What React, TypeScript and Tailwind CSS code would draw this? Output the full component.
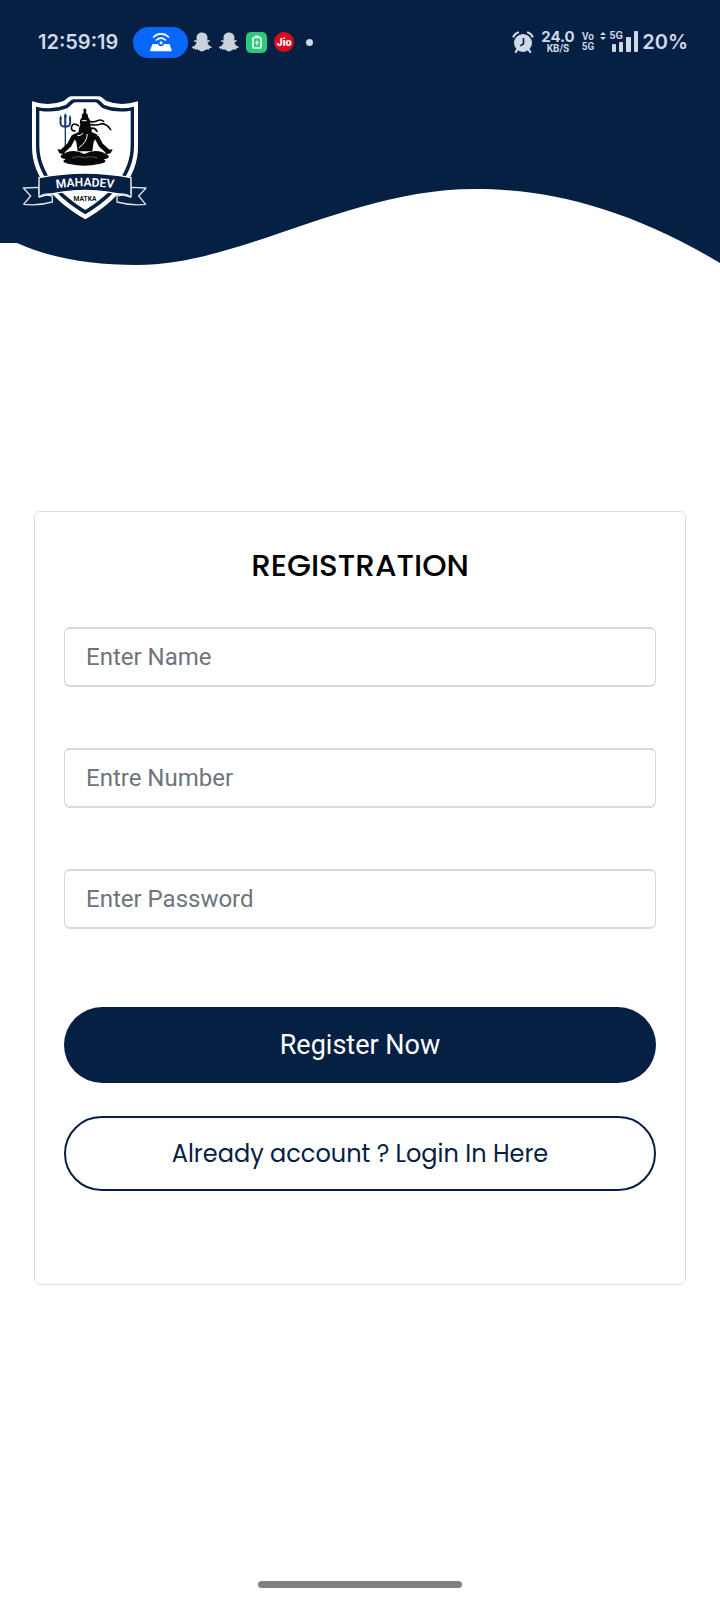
import { FaSnapchatGhost } from "react-icons/fa";

type Field = {
  id: string;
  type: string;
  placeholder: string;
};

const fields: Field[] = [
  { id: "name", type: "text", placeholder: "Enter Name" },
  { id: "number", type: "tel", placeholder: "Entre Number" },
  { id: "password", type: "password", placeholder: "Enter Password" },
];

function HotspotIcon() {
  return (
    <svg width="24" height="20" viewBox="0 0 24 20" fill="none">
      <path d="M3.500 12h17l2.300 6.200a1 1 0 0 1-1 1H2.200a1 1 0 0 1-1-1z" fill="#fff" />
      <circle cx="12" cy="11.500" r="2.800" fill="#0866fb" />
      <circle cx="12" cy="10.800" r="1.500" fill="#fff" />
      <path
        d="M4.500 5a10.500 10.500 0 0 1 15 0M7.500 8a6.300 6.300 0 0 1 9 0"
        stroke="#fff"
        strokeWidth="1.600"
        strokeLinecap="round"
      />
    </svg>
  );
}

function BatteryIcon() {
  return (
    <svg width="10" height="14" viewBox="0 0 10 14" fill="none">
      <path d="M3 1.500h4" stroke="#fff" strokeWidth="2" />
      <rect x="1" y="2.500" width="8" height="10.500" rx="1" stroke="#fff" strokeWidth="1.500" />
      <path d="M5.800 4.200 3 8.200h1.700l-.5 3L7 7.200H5.300z" fill="#fff" />
    </svg>
  );
}

function AlarmIcon() {
  return (
    <svg width="22" height="22" viewBox="0 0 22 22" fill="none">
      <circle cx="11" cy="12" r="9" fill="#cfd9e8" />
      <path
        d="M1.500 5.500a8 8 0 0 1 4.500-4M20.500 5.500a8 8 0 0 0-4.500-4M5 19l-1.200 2M17 19l1.200 2"
        stroke="#cfd9e8"
        strokeWidth="2.200"
        strokeLinecap="round"
      />
      <path d="M11.500 7v5.700L8.300 14.800" stroke="#062044" strokeWidth="1.600" />
    </svg>
  );
}

function SignalIcon() {
  return (
    <svg width="26" height="22" viewBox="0 0 26 22" fill="#cfd9e8">
      <rect x="0" y="13" width="4" height="8" rx="1" />
      <rect x="7" y="11" width="4" height="10" rx="1" />
      <rect x="14" y="6" width="5" height="15" rx="1" />
      <rect x="22" y="0" width="4" height="21" rx="1" />
    </svg>
  );
}

// shield with the seated figure, the trident and the ribbon across it
function Logo() {
  return (
    <svg className="block h-[135px] w-[140px]" viewBox="0 0 420 405" fill="none">
      <path
        d="M51 34Q102 50 146 33L161 21Q165 19 170 19H250Q256 19 260 22L274 33Q318 50 369 34V170C369 264 302 334 211 388C120 334 51 264 51 170Z"
        fill="#fff"
      />
      <path
        d="M63 50Q110 62 152 45L168 31Q172 28 177 28H244Q249 28 253 31L268 45Q310 62 357 50V168C357 254 298 320 211 373C124 320 63 254 63 168Z"
        fill="#062044"
      />
      <path
        d="M73 62Q118 70 158 54L174 40Q177 37 181 37H240Q244 37 247 40L262 54Q302 70 347 62V166C347 247 292 310 211 360C130 310 73 247 73 166Z"
        fill="#fff"
      />

      {/* trident */}
      <path d="M151 82V180" stroke="#1d3a66" strokeWidth="4" />
      <path
        d="M137 84C135 104 137 110 151 110C165 110 167 104 165 84M151 110V74"
        stroke="#1d3a66"
        strokeWidth="6"
      />
      <path d="m151 68-5 14h10zM137 74l-4 12h8zM165 74l-4 12h8z" fill="#1d3a66" />

      {/* seated figure */}
      <g fill="#080808">
        <path d="M205 58Q210 53 214 59L213 68Q221 74 219 82Q227 88 225 104Q232 116 230 126L248 134L236 156L232 184H188L184 156L170 136L191 126Q190 114 196 104Q192 90 201 82Q198 74 206 68Z" />
        <path d="M138 196Q172 172 208 192Q246 172 280 196Q286 206 266 208Q282 217 252 222Q208 233 163 222Q134 216 152 208Q132 204 138 196Z" />
        <path d="M127 178l14 1 10 5-5 9-13-3zM293 178l-14 1-10 5 5 9 13-3z" />
      </g>
      <path
        d="M176 140L162 166L142 184M244 140L258 166L278 184"
        stroke="#080808"
        strokeWidth="14"
        strokeLinejoin="round"
      />
      <path
        d="M190 107Q176 96 170 109Q166 122 180 123M224 94Q238 98 247 92Q257 87 266 94M226 104Q246 107 260 101Q276 102 287 119M228 115Q240 112 246 124"
        stroke="#080808"
        strokeWidth="5"
        strokeLinecap="round"
      />
      <path
        d="M217 132Q216 156 192 173M204 130Q195 140 187 136M201 92h14"
        stroke="#fff"
        strokeWidth="3"
      />
      <path d="M170 204Q190 196 208 203Q230 196 248 204" stroke="#777" strokeWidth="2" />

      {/* ribbon tails */}
      <path
        d="M72 292L25 294L47 318L26 343Q70 348 112 336V318L72 310ZM348 292L393 294L371 318L392 343Q350 348 306 336V318L348 310Z"
        fill="#062044"
        stroke="#dbe3ee"
        strokeWidth="4"
        strokeLinejoin="round"
      />
      <path
        d="M72 263Q210 235 348 263V321Q210 281 72 321Z"
        fill="#062044"
        stroke="#fff"
        strokeWidth="4"
        strokeLinejoin="round"
      />
      <path d="M72 321Q84 308 112 313M348 321Q334 308 306 313" stroke="#fff" strokeWidth="3" />
      <path id="ribbon-line" d="M80 302Q210 276 340 302" />
      <text
        className="font-['Roboto',sans-serif] text-[36px] font-semibold"
        fill="#fff"
        textAnchor="middle"
      >
        <textPath href="#ribbon-line" startOffset="50%">
          MAHADEV
        </textPath>
      </text>
      <text
        className="font-['Roboto',sans-serif] text-[20px] font-bold"
        x="210"
        y="332"
        fill="#111"
        textAnchor="middle"
      >
        MATKA
      </text>
    </svg>
  );
}

function StatusBar() {
  return (
    <div className="flex h-[84px] items-center justify-between pr-8 pl-[38px] font-['Inter',sans-serif] text-[#cfd9e8]">
      <div className="flex items-center">
        <span className="text-[20px] leading-6 font-semibold">12:59:19</span>
        <div className="ml-[15px] flex h-[31px] w-[55px] items-center justify-center rounded-full bg-[#0866fb]">
          <HotspotIcon />
        </div>
        <div className="ml-1 flex items-center gap-[7px] text-[#c9d1da]">
          <FaSnapchatGhost size={20} />
          <FaSnapchatGhost size={20} />
          <div className="flex h-[21px] w-[21px] items-center justify-center rounded-[5px] bg-[#2dca7b]">
            <BatteryIcon />
          </div>
          <div className="flex h-5 w-5 items-center justify-center rounded-full bg-[#dc0b1b] text-[10px] leading-3 font-extrabold text-white">
            Jio
          </div>
        </div>
        <div className="ml-3 h-[7px] w-[7px] rounded-full bg-[#cfd9e8]" />
      </div>
      <div className="flex items-center">
        <AlarmIcon />
        <div className="ml-[7px] flex flex-col items-center font-bold">
          <span className="text-[15px] leading-[14px]">24.0</span>
          <span className="font-['Roboto',sans-serif] text-[10px] leading-[10px]">KB/S</span>
        </div>
        <div className="ml-[7px] flex flex-col items-center font-['Roboto',sans-serif] text-[10px] leading-[10px] font-semibold">
          <span>Vo</span>
          <span>5G</span>
        </div>
        <div className="relative ml-[18px]">
          <SignalIcon />
          <div className="absolute -top-px -left-3 flex items-center gap-[3px]">
            <svg width="6" height="8" viewBox="0 0 6 8" fill="#cfd9e8">
              <path d="m3 0 3 3H0zM3 8l3-3H0z" />
            </svg>
            <span className="font-['Roboto',sans-serif] text-[11px] leading-3 font-semibold">
              5G
            </span>
          </div>
        </div>
        <span className="ml-1 text-[20px] leading-6 font-semibold">20%</span>
      </div>
    </div>
  );
}

export default function App() {
  return (
    <div className="flex min-h-screen flex-col bg-white">
      <header className="relative h-[266px]">
        <svg
          className="absolute inset-0 h-full w-full"
          viewBox="0 0 720 266"
          preserveAspectRatio="none"
        >
          <path
            d="M0 0H720V263C630 209 550 189 475 189C350 189 240 265 137 265C90 265 50 258 17 243H0Z"
            fill="#062044"
          />
        </svg>
        <div className="relative">
          <StatusBar />
          <div className="px-[15px] pt-[6px]">
            <Logo />
          </div>
        </div>
      </header>

      <main className="px-[34px] pt-[245px]">
        <form
          className="rounded-md border border-[#dcdfe1] px-[29px] pt-8 pb-[93px]"
          onSubmit={(e) => e.preventDefault()}
        >
          <h1 className="text-center font-['Poppins','Inter',sans-serif] text-[31px] leading-[42px] font-medium text-black">
            REGISTRATION
          </h1>
          <div className="mt-[41px] flex flex-col gap-[61px]">
            {fields.map((field) => (
              <input
                key={field.id}
                id={field.id}
                type={field.type}
                placeholder={field.placeholder}
                aria-label={field.placeholder}
                className="h-[60px] w-full rounded-md border border-y-2 border-[#d5dadd] px-[21px] font-['Roboto',sans-serif] text-[24px] text-[#212529] placeholder:text-[#6c757d]"
              />
            ))}
          </div>
          <button
            type="submit"
            className="mt-[78px] h-[76px] w-full rounded-full bg-[#062044] font-['Roboto',sans-serif] text-[27px] text-white"
          >
            Register Now
          </button>
          <a
            href="#login"
            className="mt-[33px] flex h-[75px] w-full items-center justify-center rounded-full border-2 border-[#062044] font-['Poppins','Inter',sans-serif] text-[24px] text-[#062044]"
          >
            Already account ? Login In Here
          </a>
        </form>
      </main>

      {/* gesture bar */}
      <div className="mx-auto mt-auto mb-3 h-[7px] w-[204px] rounded-full bg-[#808080]" />
    </div>
  );
}
